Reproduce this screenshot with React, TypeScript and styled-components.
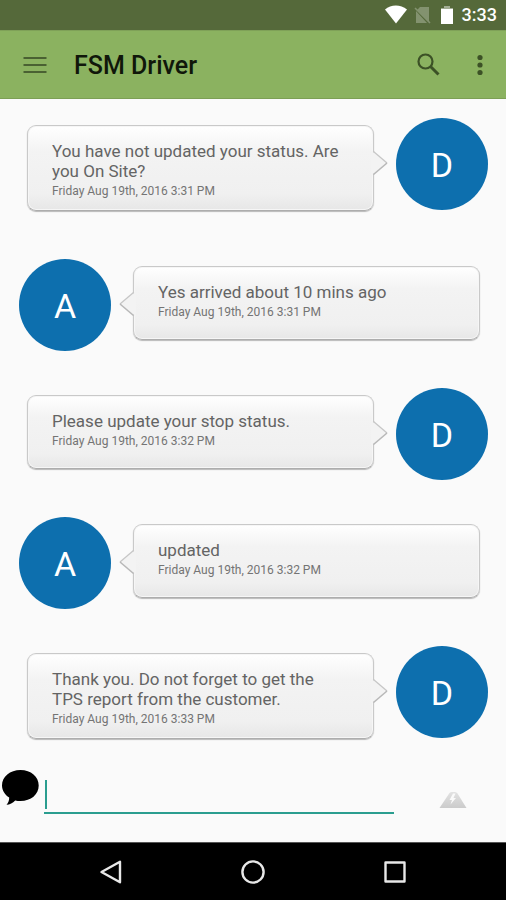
import React from "react";
import styled, { createGlobalStyle } from "styled-components";

const GlobalStyle = createGlobalStyle`
  *, *::before, *::after { box-sizing: border-box; }
  body {
    margin: 0;
    background: #fafafa;
    font-family: Roboto, "Liberation Sans", sans-serif;
  }
`;

const Screen = styled.div`
  display: flex;
  flex-direction: column;
  min-height: 100vh;
`;

const StatusBar = styled.div`
  display: flex;
  align-items: center;
  justify-content: flex-end;
  height: 30px;
  padding-right: 9px;
  background: #55693a;
  color: #fff;
`;

const StatusIcons = styled.svg`
  display: block;
  width: 70px;
  height: 20px;
  margin-right: 8px;
`;

const Clock = styled.time`
  font-size: 18px;
  font-weight: 500;
  line-height: 32px;
`;

const AppBar = styled.header`
  display: flex;
  align-items: center;
  height: 69px;
  padding: 0 5px 0 14px;
  background: #8bb260;
  border-top: 1px solid #7fa158;
  border-bottom: 1px solid #7c9f55;
`;

const Title = styled.h1`
  flex: 1;
  margin: 0 0 0 18px;
  padding-top: 2px;
  color: #10170a;
  font-size: 25px;
  font-weight: 500;
  line-height: 32px;
`;

const IconButton = styled.button<{ $width: number }>`
  display: flex;
  align-items: center;
  justify-content: center;
  width: ${(p) => p.$width}px;
  height: 42px;
  padding: 0;
  border: 0;
  background: none;
  color: #3c5126;

  svg {
    display: block;
  }
`;

const Messages = styled.main`
  display: flex;
  flex: 1;
  flex-direction: column;
  gap: 48px;
  padding: 19px 0 26px;
`;

const MessageRow = styled.article<{ $side: "left" | "right" }>`
  display: flex;
  flex-direction: ${(p) => (p.$side === "left" ? "row" : "row-reverse")};
  align-items: flex-start;
  gap: 22px;
  padding: ${(p) => (p.$side === "left" ? "0 26px 0 19px" : "0 18px 0 27px")};
`;

const AvatarSlot = styled.div`
  flex: none;
  width: 92px;
  height: 80px;
`;

const Avatar = styled.div`
  display: flex;
  align-items: center;
  justify-content: center;
  height: 92px;
  padding-top: 2px;
  border-radius: 50%;
  background: #0d6fae;
  color: #fff;
  font-size: 34px;
  line-height: 40px;
`;

const Bubble = styled.div`
  position: relative;
  flex: 1;
  min-width: 0;
  min-height: 74px;
  margin-top: 7px;
  padding: 15px 28px 9px 24px;
  border: 1px solid #c9c9c9;
  border-bottom-color: #adadad;
  border-radius: 9px;
  background: linear-gradient(#fff 0, #f3f3f3 30%, #f0f0f0 80%, #e7e7e7 100%);
  box-shadow: inset 0 0 0 1px #f6f6f6, 0 1px 1px #b8b8b8;
`;

const TailShape = styled.svg<{ $side: "left" | "right" }>`
  position: absolute;
  top: 24px;
  ${(p) => (p.$side === "left" ? "left: -15px;" : "right: -15px; transform: scaleX(-1);")}
  width: 17px;
  height: 26px;
`;

const Text = styled.p`
  margin: 0;
  color: #646464;
  font-size: 17px;
  line-height: 20px;
`;

const Stamp = styled.time`
  display: block;
  color: #747474;
  font-size: 12px;
  line-height: 20px;
`;

const Composer = styled.form`
  display: flex;
  align-items: flex-start;
  height: 77px;
`;

const SpeechIcon = styled.svg`
  flex: none;
  width: 40px;
  height: 40px;
  margin: 4px 4px 0 0;
`;

const Field = styled.label`
  display: flex;
  flex: 1;
  min-width: 0;
  height: 49px;
  padding: 15px 0 3px;
  border-bottom: 2px solid #2a9d8f;

  &::before {
    content: "";
    flex: none;
    width: 2px;
    height: 29px;
    margin-left: 1px;
    background: #2a9d8f;
  }
`;

const MessageInput = styled.input`
  flex: 1;
  min-width: 0;
  height: 29px;
  padding: 0 4px;
  border: 0;
  outline: 0;
  background: none;
  color: #333;
  caret-color: transparent;
  font: 20px Roboto, sans-serif;
`;

const SendSlot = styled.div`
  display: flex;
  justify-content: center;
  width: 112px;
  padding: 14px 0 0 6px;
`;

const NavBar = styled.nav`
  display: grid;
  grid-template-columns: 1fr 142px 142px 142px 1fr;
  align-items: center;
  height: 58px;
  background: #000;
  border-top: 1px solid #555;

  button {
    width: 100%;
    height: 48px;
    color: #e8e8e8;
  }

  button:first-child {
    grid-column: 2;
  }
`;

interface Message {
  from: string;
  side: "left" | "right";
  text: string;
  stamp: string;
}

const messages: Message[] = [
  { from: "D", side: "right", text: "You have not updated your status. Are you On Site?", stamp: "Friday Aug 19th, 2016 3:31 PM" },
  { from: "A", side: "left", text: "Yes arrived about 10 mins ago", stamp: "Friday Aug 19th, 2016 3:31 PM" },
  { from: "D", side: "right", text: "Please update your stop status.", stamp: "Friday Aug 19th, 2016 3:32 PM" },
  { from: "A", side: "left", text: "updated", stamp: "Friday Aug 19th, 2016 3:32 PM" },
  { from: "D", side: "right", text: "Thank you. Do not forget to get the TPS report from the customer.", stamp: "Friday Aug 19th, 2016 3:33 PM" },
];

function Tail({ side }: { side: "left" | "right" }) {
  return (
    <TailShape $side={side} viewBox="0 0 17 26" aria-hidden="true">
      <path d="M17 1H15V2L1 13L15 24V25H17Z" fill="#f3f3f3" />
      <path d="M14.5 1.5L1 13" fill="none" stroke="#c6c6c6" strokeWidth="1.3" />
      <path d="M1 13L14.5 24.5" fill="none" stroke="#b8b8b8" strokeWidth="1.6" />
    </TailShape>
  );
}

export default function App() {
  return (
    <>
      <GlobalStyle />
      <Screen>
        <StatusBar>
          <StatusIcons viewBox="0 0 70 20" aria-hidden="true">
            <path d="M1 4.5C7-.8 16.500-.8 23 4.500L12 18.500Z" fill="#fff" />
            <path d="M36 2H45V17L33 5ZM32 6L43 18H32Z" fill="#83926f" />
            <path d="M31 3L46 18" stroke="#83926f" strokeWidth="1.6" />
            <path d="M60 1H66V3H69V19H57V3H60Z" fill="#fff" />
            <path d="M60 1H66V3H69V4H57V3H60Z" fill="#a2ad94" />
          </StatusIcons>
          <Clock>3:33</Clock>
        </StatusBar>

        <AppBar>
          <IconButton type="button" aria-label="Menu" $width={42}>
            <svg width="24" height="18" viewBox="0 0 24 18">
              <path d="M0.500 2H23.500M0.500 9H23.500M0.500 16H23.500" stroke="#4a6132" strokeWidth="2.2" />
            </svg>
          </IconButton>
          <Title>FSM Driver</Title>
          <IconButton type="button" aria-label="Search" $width={60}>
            <svg width="24" height="24" viewBox="0 0 24 24" fill="none" stroke="currentColor">
              <circle cx="8.500" cy="8.500" r="7" strokeWidth="2.200" />
              <path d="M13.500 13.500L21.500 21.500" strokeWidth="3" />
            </svg>
          </IconButton>
          <IconButton type="button" aria-label="More options" $width={42}>
            <svg width="6" height="22" viewBox="0 0 6 22" fill="currentColor">
              <circle cx="3" cy="3.500" r="2.600" />
              <circle cx="3" cy="11" r="2.600" />
              <circle cx="3" cy="18.500" r="2.600" />
            </svg>
          </IconButton>
        </AppBar>

        <Messages>
          {messages.map((m, i) => (
            <MessageRow key={i} $side={m.side}>
              <AvatarSlot>
                <Avatar>{m.from}</Avatar>
              </AvatarSlot>
              <Bubble>
                <Text>{m.text}</Text>
                <Stamp>{m.stamp}</Stamp>
                <Tail side={m.side} />
              </Bubble>
            </MessageRow>
          ))}
        </Messages>

        <Composer onSubmit={(e) => e.preventDefault()}>
          <SpeechIcon viewBox="0 0 40 40" aria-hidden="true">
            <path
              d="M20.500 1C31 1 38.700 7.500 38.700 16.500C38.700 25.500 31 32 20.500 32C18.500 32 16.800 31.800 15.200 31.400C12.800 34 9.800 35.500 6.500 35.800C8.300 33.800 9.300 31.500 9.200 28.600C4.800 25.800 2 21.500 2 16.500C2 7.500 10 1 20.500 1Z"
              fill="#000"
            />
          </SpeechIcon>
          <Field>
            <MessageInput type="text" aria-label="Message" />
          </Field>
          <SendSlot>
            <IconButton type="submit" aria-label="Send" $width={42}>
              <svg width="28" height="18" viewBox="0 0 28 18">
                <defs>
                  <linearGradient id="slope" x1="0" y1="0" x2="0" y2="1">
                    <stop offset="0" stopColor="#e2e2e2" />
                    <stop offset="1" stopColor="#cbcbcb" />
                  </linearGradient>
                </defs>
                <path d="M10.500 2Q11.500 1 13 1H16Q17.500 1 18.500 2.500L27.500 17H0.500Z" fill="url(#slope)" />
                <path d="M14 2.500L10.500 9H13L11.500 13.500L17 7H14.500L16.500 2.500Z" fill="#fafafa" />
              </svg>
            </IconButton>
          </SendSlot>
        </Composer>

        <NavBar aria-label="System">
          <IconButton type="button" aria-label="Back" $width={142}>
            <svg width="24" height="24" viewBox="0 0 24 24" fill="none" stroke="currentColor" strokeWidth="2.400" strokeLinejoin="round">
              <path d="M2.500 12L21 1.800V22.200Z" />
            </svg>
          </IconButton>
          <IconButton type="button" aria-label="Home" $width={142}>
            <svg width="24" height="24" viewBox="0 0 24 24" fill="none" stroke="currentColor" strokeWidth="2.400">
              <circle cx="12" cy="12" r="10.600" />
            </svg>
          </IconButton>
          <IconButton type="button" aria-label="Recent apps" $width={142}>
            <svg width="24" height="24" viewBox="0 0 24 24" fill="none" stroke="currentColor" strokeWidth="2.400" strokeLinejoin="round">
              <rect x="2.500" y="2.500" width="19" height="19" />
            </svg>
          </IconButton>
        </NavBar>
      </Screen>
    </>
  );
}
